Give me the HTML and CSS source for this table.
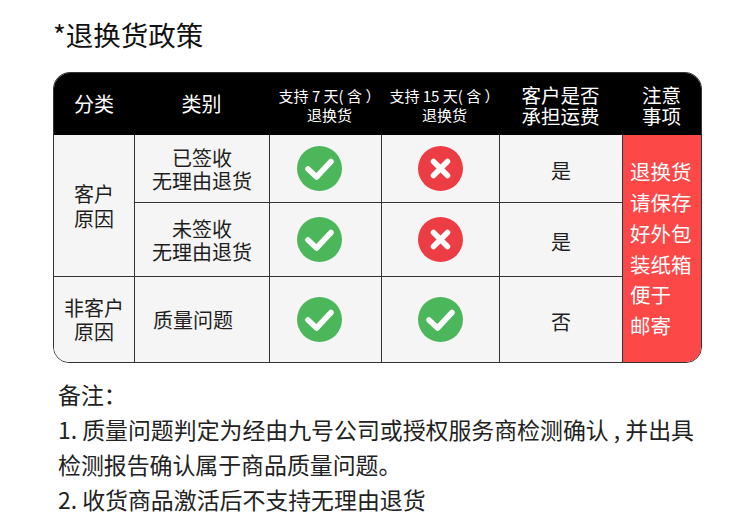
FILE: index.html
```html
<!DOCTYPE html>
<html lang="zh-CN">
<head>
<meta charset="utf-8">
<title>退换货政策</title>
<link rel="stylesheet" href="styles.css">
</head>
<body>
<div class="page">
  <h1 class="title">*退换货政策</h1>
  <div class="policy">
    <div class="cell head h-lg">分类</div>
    <div class="cell head h-lg">类别</div>
    <div class="cell head h-sm">支持 7 天( 含 ）<br>退换货</div>
    <div class="cell head h-sm">支持 15 天( 含 ）<br>退换货</div>
    <div class="cell head h-md">客户是否<br>承担运费</div>
    <div class="cell head h-md">注意<br>事项</div>

    <div class="cell body c1 span2 lh25">客户<br>原因</div>
    <div class="cell body c2 lh23">已签收<br>无理由退货</div>
    <div class="cell body c3"><svg class="ico" viewBox="0 0 45 45"><circle cx="22.5" cy="22.5" r="22.5" fill="#4bb75a"/><polyline points="11,23 19.5,31 34,15.5" fill="none" stroke="#fff" stroke-width="5.5" stroke-linecap="round" stroke-linejoin="round"/></svg></div>
    <div class="cell body c4"><svg class="ico" viewBox="0 0 45 45"><circle cx="22.5" cy="22.5" r="22.5" fill="#eb3d43"/><path d="M15.5 15.5 L29.5 29.5 M29.5 15.5 L15.5 29.5" fill="none" stroke="#fff" stroke-width="5.5" stroke-linecap="round"/></svg></div>
    <div class="cell body c5">是</div>
    <div class="cell note">退换货<br>请保存<br>好外包<br>装纸箱<br>便于<br>邮寄</div>

    <div class="cell body c2 top lh23">未签收<br>无理由退货</div>
    <div class="cell body c3 top"><svg class="ico" viewBox="0 0 45 45"><circle cx="22.5" cy="22.5" r="22.5" fill="#4bb75a"/><polyline points="11,23 19.5,31 34,15.5" fill="none" stroke="#fff" stroke-width="5.5" stroke-linecap="round" stroke-linejoin="round"/></svg></div>
    <div class="cell body c4 top"><svg class="ico" viewBox="0 0 45 45"><circle cx="22.5" cy="22.5" r="22.5" fill="#eb3d43"/><path d="M15.5 15.5 L29.5 29.5 M29.5 15.5 L15.5 29.5" fill="none" stroke="#fff" stroke-width="5.5" stroke-linecap="round"/></svg></div>
    <div class="cell body c5 top">是</div>

    <div class="cell body c1 top lh24">非客户<br>原因</div>
    <div class="cell body c2 top shift">质量问题</div>
    <div class="cell body c3 top"><svg class="ico" viewBox="0 0 45 45"><circle cx="22.5" cy="22.5" r="22.5" fill="#4bb75a"/><polyline points="11,23 19.5,31 34,15.5" fill="none" stroke="#fff" stroke-width="5.5" stroke-linecap="round" stroke-linejoin="round"/></svg></div>
    <div class="cell body c4 top"><svg class="ico" viewBox="0 0 45 45"><circle cx="22.5" cy="22.5" r="22.5" fill="#4bb75a"/><polyline points="11,23 19.5,31 34,15.5" fill="none" stroke="#fff" stroke-width="5.5" stroke-linecap="round" stroke-linejoin="round"/></svg></div>
    <div class="cell body c5 top">否</div>
  </div>
  <div class="notes">
    <p>备注：</p>
    <p>1. 质量问题判定为经由九号公司或授权服务商检测确认 , 并出具</p>
    <p>检测报告确认属于商品质量问题。</p>
    <p>2. 收货商品激活后不支持无理由退货</p>
  </div>
</div>
</body>
</html>
```

FILE: styles.css
```css
* { box-sizing: border-box; }
html, body { margin: 0; padding: 0; background: #fff; }
body {
  font-family: "Noto Sans CJK SC", "Noto Sans", "Liberation Sans", sans-serif;
  color: #1e1e1e;
}
.page {
  width: 750px;
  height: 532px;
  padding: 16px 0 0 53px;
}
.title {
  margin: 0 0 20px 0;
  font-size: 27.5px;
  line-height: 36px;
  font-weight: normal;
  color: #111;
}
.policy {
  width: 649px;
  display: grid;
  grid-template-columns: 80px 135px 112px 118px 123px 79px;
  grid-template-rows: 62px 67px 74px 86px;
  border: 1px solid #333;
  border-radius: 17px 17px 16px 16px;
  overflow: hidden;
  background: #f5f5f5;
}
.cell {
  display: flex;
  align-items: center;
  justify-content: center;
  text-align: center;
}
.head {
  background: #000;
  color: #fff;
}
.h-lg { font-size: 20px; line-height: 24px; }
.h-sm { font-size: 15px; line-height: 19px; padding-top: 1px; padding-left: 9px; white-space: nowrap; }
.h-md { font-size: 19.5px; line-height: 21px; padding-top: 1px; }
.body {
  font-size: 20px;
  line-height: 24px;
  color: #1e1e1e;
  background: #f5f5f5;
}
.lh23 { line-height: 23px; }
.lh24 { line-height: 24px; }
.lh25 { line-height: 25px; }
.c2, .c3, .c4, .c5 { border-left: 1px solid #333; }
.c3 { padding-right: 12px; }
.top { border-top: 1px solid #333; }
.c1 { grid-column: 1; }
.span2 { grid-row: 2 / span 2; }
.shift { padding-right: 18px; }
.c5 { padding-top: 5px; }
.ico { width: 45px; height: 45px; display: block; }
.note {
  grid-column: 6;
  grid-row: 2 / span 3;
  background: #fd4848;
  border-left: 1px solid #333;
  color: #fff;
  font-size: 20.5px;
  line-height: 30.8px;
  justify-content: flex-start;
  text-align: left;
  padding-left: 7px;
  padding-top: 0;
}
.notes {
  margin-top: 14px;
  padding-left: 5px;
  font-size: 22.9px;
  line-height: 35px;
  color: #222;
}
.notes p { margin: 0; white-space: nowrap; }
```
